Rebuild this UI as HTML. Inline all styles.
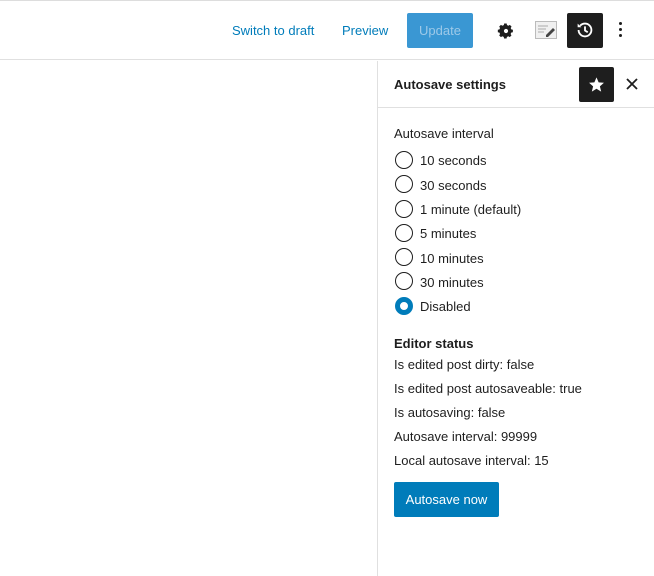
<!DOCTYPE html>
<html><head><style>
body{margin:0;width:654px;height:576px;background:#fff;font-family:"Liberation Sans",sans-serif;font-size:13px;color:#1e1e1e;position:relative;overflow:hidden}
.a{position:absolute}
.top{left:0;top:0;width:654px;height:60px;border-top:1px solid #ddd;border-bottom:1px solid #e0e0e0;box-sizing:border-box}
.link{color:#007cba;font-size:13px}
.side{left:377px;top:61px;width:277px;height:515px;border-left:1px solid #e0e0e0}
.r{position:absolute;left:395px;width:16px;height:16px;border:1.5px solid #1e1e1e;border-radius:50%}
.rl{position:absolute;left:420px}
</style></head><body>
<div class="a top"></div>
<div class="a link" style="left:232px;top:23px">Switch to draft</div>
<div class="a link" style="left:342px;top:23px">Preview</div>
<div class="a" style="left:407px;top:13px;width:66px;height:35px;background:#3a97d3;border-radius:2px;color:#9dc9e8;text-align:center;line-height:35px">Update</div>
<svg class="a" style="left:496px;top:21px" width="20" height="20" viewBox="0 0 24 24"><path fill="#1e1e1e" d="M12 8.5a3.5 3.5 0 100 7 3.5 3.5 0 000-7zm8.3 2l-2-.4a6.6 6.6 0 00-.7-1.7l1.1-1.7-2.1-2.1-1.7 1.1a6.6 6.6 0 00-1.7-.7l-.4-2h-3l-.4 2c-.6.1-1.2.4-1.7.7L5.9 4.6 3.8 6.7l1.1 1.7c-.3.5-.6 1.1-.7 1.7l-2 .4v3l2 .4c.1.6.4 1.2.7 1.7l-1.1 1.7 2.1 2.1 1.7-1.1c.5.3 1.1.6 1.7.7l.4 2h3l.4-2c.6-.1 1.2-.4 1.7-.7l1.7 1.1 2.1-2.1-1.1-1.7c.3-.5.6-1.1.7-1.7l2-.4z"/><circle cx="12" cy="12" r="2.5" fill="#fff"/></svg>
<svg class="a" style="left:535px;top:21px" width="22" height="18" viewBox="0 0 22 18"><rect x="0.5" y="0.5" width="21" height="17" fill="#f0f0f0" stroke="#bbb"/><path d="M3 5h10M3 8h8M3 11h6" stroke="#aaa"/><path d="M11 14l7-7 2 2-7 7h-2z" fill="#444"/></svg>
<div class="a" style="left:567px;top:13px;width:36px;height:35px;background:#1e1e1e;border-radius:2px"></div>
<svg class="a" style="left:574px;top:19px" width="22" height="22" viewBox="0 0 24 24"><path d="M5 12a7 7 0 107-7 7 7 0 00-5.3 2.4" fill="none" stroke="#fff" stroke-width="2"/><path d="M4 5v4h4z" fill="#fff"/><path d="M12 8v4.5l3 2" fill="none" stroke="#fff" stroke-width="2"/></svg>
<div class="a" style="left:619px;top:22px;width:3px;height:3px;background:#1e1e1e;border-radius:50%;box-shadow:0 6px 0 #1e1e1e,0 12px 0 #1e1e1e"></div>
<div class="a side"></div>
<div class="a" style="left:378px;top:107px;width:276px;border-top:1px solid #e0e0e0"></div>
<div class="a" style="left:394px;top:77px;font-weight:bold">Autosave settings</div>
<div class="a" style="left:579px;top:67px;width:35px;height:35px;background:#1e1e1e;border-radius:2px"></div>
<svg class="a" style="left:588px;top:76px" width="17" height="17" viewBox="0 0 24 24"><path fill="#fff" d="M12 2l3 7 7.5.6-5.7 5 1.8 7.4L12 18l-6.6 4 1.8-7.4-5.7-5L9 9z"/></svg>
<svg class="a" style="left:626px;top:78px" width="12" height="12" viewBox="0 0 12 12"><path d="M1 1l10 10M11 1L1 11" stroke="#1e1e1e" stroke-width="1.8"/></svg>
<div class="a" style="left:394px;top:126px">Autosave interval</div>
<div class="r" style="top:151px"></div><div class="rl" style="top:153px">10 seconds</div>
<div class="r" style="top:175px"></div><div class="rl" style="top:178px">30 seconds</div>
<div class="r" style="top:200px"></div><div class="rl" style="top:202px">1 minute (default)</div>
<div class="r" style="top:224px"></div><div class="rl" style="top:226px">5 minutes</div>
<div class="r" style="top:248px"></div><div class="rl" style="top:251px">10 minutes</div>
<div class="r" style="top:272px"></div><div class="rl" style="top:275px">30 minutes</div>
<div class="r" style="top:297px;border:5.5px solid #007cba;width:8px;height:8px;background:#fff"></div><div class="rl" style="top:299px">Disabled</div>
<div class="a" style="left:394px;top:336px;font-weight:bold">Editor status</div>
<div class="a" style="left:394px;top:357px">Is edited post dirty: false</div>
<div class="a" style="left:394px;top:381px">Is edited post autosaveable: true</div>
<div class="a" style="left:394px;top:405px">Is autosaving: false</div>
<div class="a" style="left:394px;top:429px">Autosave interval: 99999</div>
<div class="a" style="left:394px;top:453px">Local autosave interval: 15</div>
<div class="a" style="left:394px;top:482px;width:105px;height:35px;background:#007cba;border-radius:2px;color:#fff;text-align:center;line-height:35px">Autosave now</div>
</body></html>
